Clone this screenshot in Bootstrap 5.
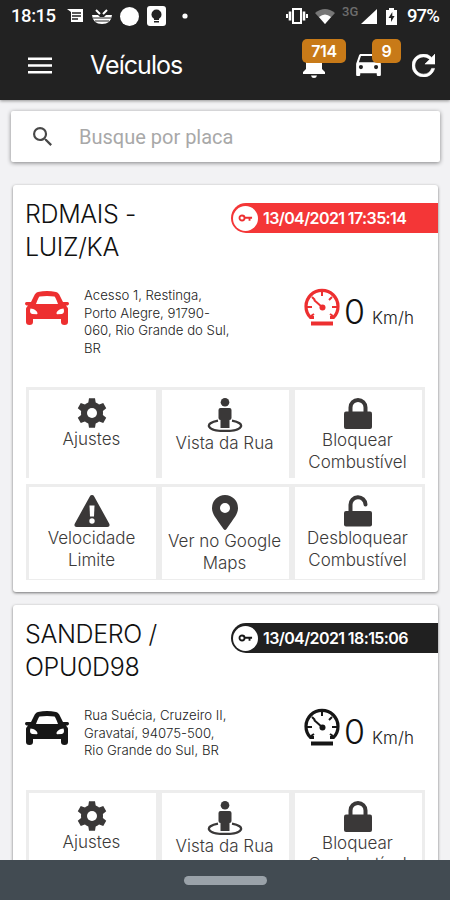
<!DOCTYPE html>
<html lang="pt-BR">
<head>
<meta charset="utf-8">
<meta name="viewport" content="width=device-width, initial-scale=1">
<title>Veículos</title>
<link rel="stylesheet" href="https://cdn.jsdelivr.net/npm/bootstrap@5.3.0/dist/css/bootstrap.min.css">
<style>
body{font-family:Inter,"Liberation Sans",sans-serif;background:#f2f2f4;height:900px;overflow:hidden;color:#111}
svg{display:block;flex:none}
.app-top{background:#222;color:#fff;height:100px;box-shadow:0 1px 3px #0006}
.status{height:32px;padding:0 10px 0 11px;font:500 18.5px/32px Roboto,sans-serif}
.status .clock{width:56px;letter-spacing:-.45px}
.net{color:#6d6d6d;font-size:13px;line-height:24px;width:17px;height:32px}
.pct{font-size:18.5px;letter-spacing:-.9px;width:33px}
.toolbar{height:68px;padding:0 15px 2px 28px}
.app-title{font-size:25px;letter-spacing:-.95px;margin-left:38px;line-height:30px}
.pin{background:#c87a18;font-size:16px;font-weight:600;line-height:24px;height:24px;border-radius:5px;color:#fff;text-align:center;letter-spacing:-.4px;position:absolute}
.pin-bell{left:-1px;top:-13px;width:44px}
.pin-car{left:16px;top:-15px;width:29px}
.searchbox{margin:11px 10px 0 11px;height:51px;padding-left:22px;border-radius:2px;box-shadow:0 1px 4px #0007;font:20px Roboto,sans-serif;color:#a8a8a8}
.searchbox span{margin-left:27px}
.vehicle{margin:0 12px 13px 13px;border-radius:3px;box-shadow:0 1px 3px #0008;padding:0 13px 12px 12px}
.vehicle.first{margin-top:23px}
.vhead{padding-top:12px;margin-right:-13px;height:82px}
.vname{font-size:25px;line-height:33px;letter-spacing:-.35px;font-weight:350;margin:1px 0 0}
.stamp{height:30px;width:207px;margin-top:6px;border-radius:15px 0 0 15px;font-size:16px;font-weight:600;letter-spacing:-.61px;padding-left:2px;color:#fff}
.stamp i{width:25px;height:25px;border-radius:50%;background:#fff}
.stamp span{margin-left:5px}
.red .stamp{background:#f43637}.red{--tone:#ed2f30}
.black .stamp{background:#202020}.black{--tone:#161616}
.tone{color:var(--tone)}
.vinfo{margin-top:19px;margin-bottom:31px}
.addr{font-size:13.2px;line-height:17.5px;letter-spacing:0;width:180px;margin-left:15px;padding-top:1px;margin-bottom:-1px;color:#222;font-weight:350}
.speed{margin-left:40px;margin-top:2px}
.num{font-size:34px;line-height:40px;font-weight:300;width:24px;margin-top:4px}
.unit{font-size:17px;letter-spacing:.1px;line-height:22px;margin-top:19px;color:#222;font-weight:350}
.tiles{margin-left:1px;display:grid;grid-template-columns:repeat(3,1fr);row-gap:6px}
.tile{border:3px solid #ededed;border-bottom:0;height:91px;padding-top:8px;text-align:center;font-size:17px;line-height:21.5px;letter-spacing:0;color:#3c3a39;font-weight:300;white-space:nowrap;padding-right:2px}
.tile.low{height:96px;border-bottom:1px solid #ededed}
.tile svg{margin:0 auto 1px}
.gest{height:40px;background:#424b52}
.gest div{width:83px;height:9px;border-radius:5px;background:#9aa2a9}
</style>
<script src="https://cdn.jsdelivr.net/npm/bootstrap@5.3.0/dist/js/bootstrap.bundle.min.js"></script>
</head>
<body class="d-flex flex-column">
<svg width="0" height="0" class="position-absolute">
<symbol id="car" viewBox="0 0 44 34"><path fill="currentColor" fill-rule="evenodd" d="M13 1Q22-.8 31 1c2 .5 3 2 4 4l3 6h4.500q1.500 0 1.500 1.500T42.500 14.500H41q2 2 2 4V31q0 3-3.500 3T36 31v-3H8v3q0 3-3.500 3T1 31V18.500q0-2 2-4H1.500Q0 14 0 12.500T1.500 11H6l3-6c1-2 2-3.500 4-4zM14.500 5.500q-1 .5-3.500 7.500h22q-2.500-7-3.500-7.500Q22 4.300 14.500 5.500zM5.500 17.500q-1.500 5 1.500 5.500l5 .2c2-1-2-5.700-6.500-5.700zm33 0c-4.500 0-8.500 4.700-6.500 5.700l5-.2q3-.5 1.500-5.500z"/></symbol>
<symbol id="gauge" viewBox="0 0 36 38"><g fill="none" stroke="currentColor" stroke-width="3.200"><path d="M10 29.500H6.500A16 16 0 1 1 29.500 29.500H26"/><path stroke-width="2" d="M18 3v5M3 19h5M28 19h5M8 9l3 3M28 9l-3 3M7 28l3-2M29 28l-3-2"/><path stroke-width="2" d="M10 12l8 7"/></g><circle cx="18.500" cy="19.500" r="3" fill="currentColor"/><path fill="currentColor" d="M7 33.500h22V37.500H7z"/></symbol>
<symbol id="key" viewBox="0 0 16 8"><path fill="none" stroke="currentColor" stroke-width="2" d="M7 4a2.700 2.700 0 1 1-5.400 0A2.700 2.700 0 0 1 7 4zM7 3.700h8M12.300 4v3"/></symbol>
<symbol id="gear" viewBox="-15 -15 30 30"><g fill="#3a3838"><path id="tooth" d="M-3-14.700h6l.8 5h-7.600zM-3 14.700h6l.8-5h-7.600z"/><use href="#tooth" transform="rotate(60)"/><use href="#tooth" transform="rotate(120)"/><circle r="11"/></g><circle r="5" fill="#fff"/></symbol>
<symbol id="person" viewBox="0 0 36 34"><g fill="#3a3838"><circle cx="18" cy="4.300" r="4.300"/><path d="M13.500 10h9q2 0 2 2v8q0 2-2 2v8h-9v-8q-2 0-2-2v-8q0-2 2-2z"/></g><path d="M11 22.700C-3 25-1 33 18 33s21-8 7-10.300" fill="none" stroke="#3a3838" stroke-width="2.300"/></symbol>
<symbol id="lock" viewBox="0 0 28 31"><path fill="none" stroke="#3a3838" stroke-width="4" d="M6.500 15V9.500a7.500 7.500 0 0 1 15 0V15"/><rect y="13.500" width="28" height="17.500" rx="2" fill="#3a3838"/></symbol>
<symbol id="unlock" viewBox="0 0 28 31"><path fill="none" stroke="#3a3838" stroke-width="4" stroke-linecap="round" d="M6.500 17V9.500a7.500 7.500 0 0 1 15-.5"/><rect y="15.500" width="28" height="15.500" rx="2" fill="#3a3838"/></symbol>
<symbol id="warn" viewBox="0 0 36 32"><path fill="#3a3838" d="M18 0q1.500 0 2.200 1.400L35.400 29q.8 3-2 3H2.600q-2.800 0-2-3L15.800 1.400Q16.500 0 18 0z"/><path fill="#fff" d="M15.500 10.500h5l-.5 11h-4z"/><circle cx="18" cy="26" r="2.700" fill="#fff"/></symbol>
<symbol id="pinmap" viewBox="0 0 26 35"><path fill="#3a3838" fill-rule="evenodd" d="M13 0a13 13 0 0 1 13 13c0 6-4 10-11.500 21q-1.500 2-3 0C4 23 0 19 0 13A13 13 0 0 1 13 0zm0 8a5 5 0 1 0 0 10 5 5 0 0 0 0-10z"/></symbol>
</svg>
<header class="app-top flex-shrink-0 position-relative">
 <div class="status d-flex align-items-center">
  <span class="clock">18:15</span>
  <svg width="17" height="14" viewBox="0 0 17 14"><path fill="#fff" d="M0 0h16v13H4V3z"/><path stroke="#222" stroke-width="1.300" d="M5 4h9M5 7h9M5 10h6"/></svg>
  <svg width="20" height="15" viewBox="0 0 20 15" class="ms-2"><path fill="#fff" d="M0 6h6l2 2h4l2-2h6q-1 9-10 9T0 6z"/><path stroke="#fff" stroke-width="2" d="M4 1l4 4M15 1l-4 4"/><path stroke="#222" d="M1 9h18M3 12h14"/></svg>
  <svg width="19" height="19" viewBox="0 0 19 19" class="ms-2"><circle cx="9.500" cy="9.500" r="9.500" fill="#fff"/></svg>
  <svg width="19" height="20" viewBox="0 0 19 20" class="ms-2"><rect width="19" height="20" rx="3" fill="#fff"/><circle cx="9.500" cy="8.500" r="5" fill="#222"/><path fill="#222" d="M7 12h5v2H7zM7 15h5v1.500H7z"/></svg>
  <svg width="6" height="6" viewBox="0 0 6 6" style="margin-left:16px"><circle cx="3" cy="3" r="2.600" fill="#fff"/></svg>
  <svg width="22" height="16" viewBox="0 0 22 16" class="ms-auto"><path fill="none" stroke="#fff" stroke-width="2" d="M7 1h8v14H7z"/><path stroke="#fff" stroke-width="2.600" d="M4 3.500v9M18 3.500v9"/><path stroke="#fff" stroke-width="2" d="M1 6v4M21 6v4"/></svg>
  <svg width="20" height="15" viewBox="0 0 20 15" style="margin-left:7px"><path fill="#777" d="M0 4q10-8 20 0L10 15z"/><path fill="#fff" d="M4 8q6-5 12 0l-6 7z"/></svg>
  <span class="net" style="margin:0 2px 0 7px">3G</span>
  <svg width="16" height="15" viewBox="0 0 16 15"><path fill="#fff" d="M16 0v15H0z"/></svg>
  <svg width="11" height="17" viewBox="0 0 11 17" style="margin:0 10px 0 9px"><path fill="#fff" d="M3 0h5v2h3v15H0V2h3z"/><path fill="#222" d="M6.300 4L2.500 10H5v4l3.600-6H6.300z"/></svg>
  <span class="pct">97%</span>
 </div>
 <div class="toolbar d-flex align-items-center">
  <svg width="24" height="17" viewBox="0 0 24 17"><path stroke="#fff" stroke-width="2.600" d="M0 1.800h24M0 8.500h24M0 15.200h24"/></svg>
  <span class="app-title me-auto">Veículos</span>
  <div class="position-relative" style="margin-right:31px"><svg width="22" height="26" viewBox="0 0 22 26"><path fill="#fff" d="M11 0c5 0 8 4 8 9v8l3 3v2H0v-2l3-3V9c0-5 3-9 8-9zM8 23.500h6q-.5 2.500-3 2.500t-3-2.500z"/></svg><span class="pin pin-bell">714</span></div>
  <div class="position-relative" style="margin-right:31px"><svg width="25" height="22" viewBox="3 5 18 16"><path fill="#fff" d="M18.920 6.010C18.720 5.420 18.160 5 17.500 5h-11c-.66 0-1.210.42-1.420 1.010L3 12v8c0 .55.45 1 1 1h1c.55 0 1-.45 1-1v-1h12v1c0 .55.45 1 1 1h1c.55 0 1-.45 1-1v-8l-2.080-5.990zM6.500 16a1.500 1.500 0 1 1 0-3 1.500 1.500 0 0 1 0 3zm11 0a1.500 1.500 0 1 1 0-3 1.500 1.500 0 0 1 0 3zM5 11l1.500-4.500h11L19 11H5z"/></svg><span class="pin pin-car">9</span></div>
  <svg width="23" height="23" viewBox="4 4 16 16"><path fill="#fff" stroke="#fff" stroke-width=".4" d="M17.650 6.350A7.958 7.958 0 0 0 12 4c-4.420 0-7.990 3.580-7.990 8s3.570 8 7.990 8c3.730 0 6.840-2.550 7.730-6h-2.080A5.990 5.990 0 0 1 12 18c-3.310 0-6-2.690-6-6s2.690-6 6-6c1.660 0 3.140.69 4.220 1.780L13 11h7V4l-2.350 2.350z"/></svg>
 </div>
</header>
<main class="flex-grow-1 overflow-hidden" style="min-height:0">
 <div class="searchbox bg-white d-flex align-items-center">
  <svg width="19" height="19" viewBox="3 3 17.500 17.500"><path fill="#484848" d="M15.500 14h-.79l-.28-.27A6.471 6.471 0 0 0 16 9.500 6.500 6.500 0 1 0 9.500 16c1.610 0 3.090-.59 4.230-1.570l.27.280v.79l5 4.990L20.490 19l-4.990-5zm-6 0a4.500 4.500 0 1 1 0-9 4.500 4.500 0 0 1 0 9z"/></svg>
  <span>Busque por placa</span>
 </div>
 <section class="vehicle first bg-white red">
  <div class="vhead d-flex justify-content-between align-items-start">
   <h2 class="vname">RDMAIS -<br>LUIZ/KA</h2>
   <div class="stamp d-flex align-items-center"><i class="d-flex align-items-center justify-content-center tone"><svg width="15" height="8"><use href="#key"/></svg></i><span>13/04/2021 17:35:14</span></div>
  </div>
  <div class="vinfo d-flex align-items-start">
   <svg class="tone" width="44" height="34" style="margin-top:5px"><use href="#car"/></svg>
   <p class="addr">Acesso 1, Restinga,<br>Porto Alegre, 91790-<br>060, Rio Grande do Sul,<br>BR</p>
   <div class="speed d-flex"><svg class="tone" width="36" height="38"><use href="#gauge"/></svg><span class="num ms-1">0</span><span class="unit ms-1">Km/h</span></div>
  </div>
  <div class="tiles">
   <div class="tile"><svg width="30" height="30"><use href="#gear"/></svg>Ajustes</div>
   <div class="tile"><svg width="36" height="34"><use href="#person"/></svg>Vista da Rua</div>
   <div class="tile"><svg width="28" height="31"><use href="#lock"/></svg>Bloquear<br>Combustível</div>
   <div class="tile low"><svg width="36" height="32"><use href="#warn"/></svg>Velocidade<br>Limite</div>
   <div class="tile low"><svg width="26" height="35"><use href="#pinmap"/></svg>Ver no Google<br>Maps</div>
   <div class="tile low"><svg width="28" height="32"><use href="#unlock"/></svg>Desbloquear<br>Combustível</div>
  </div>
 </section>
 <section class="vehicle bg-white black">
  <div class="vhead d-flex justify-content-between align-items-start">
   <h2 class="vname">SANDERO /<br>OPU0D98</h2>
   <div class="stamp d-flex align-items-center"><i class="d-flex align-items-center justify-content-center tone"><svg width="15" height="8"><use href="#key"/></svg></i><span>13/04/2021 18:15:06</span></div>
  </div>
  <div class="vinfo d-flex align-items-start">
   <svg class="tone" width="44" height="34" style="margin-top:5px"><use href="#car"/></svg>
   <p class="addr">Rua Suécia, Cruzeiro II,<br>Gravataí, 94075-500,<br>Rio Grande do Sul, BR</p>
   <div class="speed d-flex"><svg class="tone" width="36" height="38"><use href="#gauge"/></svg><span class="num ms-1">0</span><span class="unit ms-1">Km/h</span></div>
  </div>
  <div class="tiles">
   <div class="tile"><svg width="30" height="30"><use href="#gear"/></svg>Ajustes</div>
   <div class="tile"><svg width="36" height="34"><use href="#person"/></svg>Vista da Rua</div>
   <div class="tile"><svg width="28" height="31"><use href="#lock"/></svg>Bloquear<br>Combustível</div>
  </div>
 </section>
</main>
<footer class="gest flex-shrink-0 d-flex align-items-center justify-content-center"><div></div></footer>
</body>
</html>
